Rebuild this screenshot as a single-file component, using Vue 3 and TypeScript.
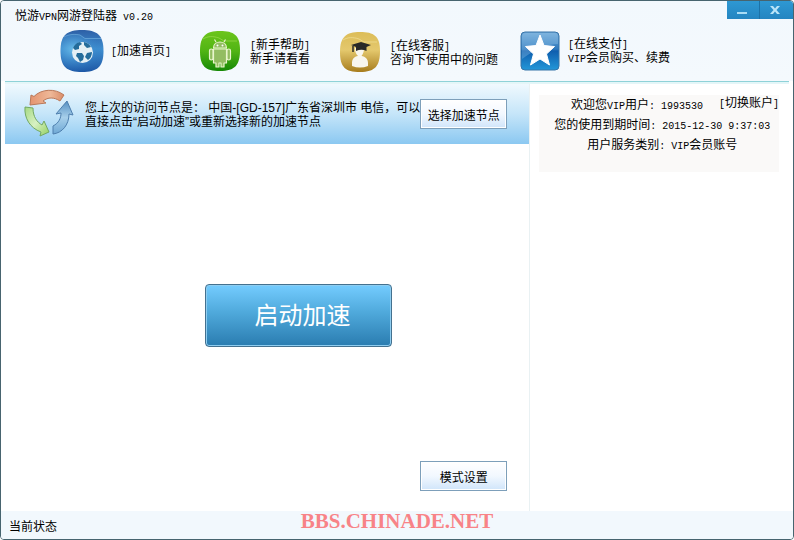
<script setup lang="ts">
import { ref } from 'vue'

const version = ref('v0.20')
const account = ref('1993530')
const expires = ref('2015-12-30 9:37:03')
</script>

<template>
  <div class="window" lang="zh-CN">
    <header class="header">
      <div class="titlebar">
        <h1 class="title">悦游<span class="half">VPN</span>网游登陆器<span class="half">&nbsp;{{ version }}</span></h1>
        <div class="controls">
          <button class="control" type="button" aria-label="最小化">
            <svg width="32" height="18" viewBox="0 0 32 18"><path d="M10 12h10" stroke="#a9dcf5" stroke-width="2" /></svg>
          </button>
          <button class="control close" type="button" aria-label="关闭">
            <svg width="33" height="18" viewBox="0 0 33 18"><path d="M10 5h3l2 2.500 2-2.500h3l-3.500 4 3.500 4h-3l-2-2.500-2 2.500h-3l3.500-4z" fill="#b9e4f8" /></svg>
          </button>
        </div>
      </div>
      <nav class="nav">
        <a class="nav-item" href="#home">
          <svg class="icon-home" width="44" height="44" viewBox="0 0 44 44">
            <defs>
              <linearGradient id="blue" x1="0" y1="0" x2="0" y2="1"><stop offset="0" stop-color="#2d5fa6" /><stop offset=".45" stop-color="#3f8fd0" /><stop offset="1" stop-color="#1d57a5" /></linearGradient>
              <radialGradient id="blueGlow" cx=".3" cy=".4" r=".7"><stop offset="0" stop-color="#72c5ee" stop-opacity=".85" /><stop offset="1" stop-color="#2370c0" stop-opacity="0" /></radialGradient>
            </defs>
            <path d="M22 1C37 1 43.500 6 43.500 22S37 43 22 43 .5 38 .5 22 7 1 22 1z" fill="url(#blue)" />
            <path d="M3 9c5-4 12-4 17-3l5 3.500h17c1 5 1 11 1 14-1 16-9 19-21 19S1 39 1 22c0-6 0-9 2-13z" fill="url(#blueGlow)" />
            <path d="M4 8c5-3 11-3 16-2l5 3.500h16" fill="none" stroke="#78b7e4" stroke-width="1" opacity=".6" />
            <circle cx="22.500" cy="23.500" r="10.500" fill="#e4eff5" />
            <path d="M13 19q2-5 7-6l2 2-3 2 0 3-4 1zM24 13q5 1 7 5l-4 1-3-3zM17 24l5 0 2 3-1 4-3 2-2-4-2-2zM27 24l5-1q0 5-4 8l-3-3z" fill="#246c9b" />
          </svg>
          <span class="nav-text"><i class="half">[</i>加速首页<i class="half">]</i></span>
        </a>
        <a class="nav-item" href="#help">
          <svg width="42" height="42" viewBox="0 0 42 42">
            <defs><linearGradient id="green" x1="0" y1="0" x2="0" y2="1"><stop offset="0" stop-color="#6cc51c" /><stop offset=".5" stop-color="#51b414" /><stop offset="1" stop-color="#168806" /></linearGradient></defs>
            <path d="M20 1C34 1 40 5 40 20S35 41 20 41 0 36 0 21 6 1 20 1z" fill="url(#green)" />
            <path d="M3 9c5-3 10-3 16-1l5 3h13" fill="none" stroke="#a7df58" opacity=".6" />
            <g fill="#93bd62" stroke="#e9f5cd" stroke-width="1.200" stroke-linejoin="round">
              <path d="M16 12l-1.500-2.500M24 12l1.500-2.500" />
              <path d="M13.500 18c0-8 13-8 13 0z" />
              <path d="M13.500 19h13v14h-2.500v4h-3v-4h-2v4h-3v-4h-2.500z" />
              <rect x="9.500" y="19" width="3.500" height="11" rx="1.700" /><rect x="27" y="19" width="3.500" height="11" rx="1.700" />
            </g>
            <circle cx="17.500" cy="15.500" r="1" fill="#fff" /><circle cx="22.500" cy="15.500" r="1" fill="#fff" />
          </svg>
          <span class="nav-text"><i class="half">[</i>新手帮助<i class="half">]</i><br />新手请看看</span>
        </a>
        <a class="nav-item low" href="#service">
          <svg width="42" height="42" viewBox="0 0 42 42">
            <defs><linearGradient id="gold" x1="0" y1="0" x2="0" y2="1"><stop offset="0" stop-color="#dcbd58" /><stop offset=".45" stop-color="#e4c86d" /><stop offset="1" stop-color="#a77c1d" /></linearGradient></defs>
            <path d="M20 1C34 1 40 5 40 20S35 41 20 41 0 36 0 21 6 1 20 1z" fill="url(#gold)" />
            <path d="M3 9c5-3 10-3 16-1l5 3h13" fill="none" stroke="#f1df98" opacity=".7" />
            <path d="M15 17h9c0 4-1 6-2.500 8 4 .5 6.500 3 6.500 7v3q-8 3-16 0v-3c0-4 2-6.500 6-7-2-2-3-4-3-8z" fill="#f8f6ee" />
            <path d="M11 14l10-3 10 3-4.500 2v4q-5-2.500-10.500 0v-4z" fill="#292a28" /><path d="M13 15v6" stroke="#292a28" stroke-width="1.500" />
          </svg>
          <span class="nav-text"><i class="half">[</i>在线客服<i class="half">]</i><br />咨询下使用中的问题</span>
        </a>
        <a class="nav-item" href="#pay">
          <svg width="40" height="40" viewBox="0 0 40 40">
            <defs><linearGradient id="starBlue" x1="0" y1="0" x2="0" y2="1"><stop offset="0" stop-color="#70a9d8" /><stop offset=".45" stop-color="#2c78bd" /><stop offset=".5" stop-color="#0f5eae" /><stop offset="1" stop-color="#2397d8" /></linearGradient></defs>
            <rect x="1" y="1" width="38" height="38" rx="4" fill="url(#starBlue)" stroke="#3674a8" />
            <path d="M2 6q0-4 4-4h29q3 0 3 4v7Q22 13 2 28z" fill="#a5d2ef" opacity=".3" />
            <path d="M20 4l4 10.500 10.500 1-8 7.500 3 11-9.500-6-9.500 6 3-11-8-7.500 10.500-1z" fill="#fff" stroke="#fff" stroke-linejoin="round" />
          </svg>
          <span class="nav-text"><i class="half">[</i>在线支付<i class="half">]</i><br /><i class="half">VIP</i>会员购买、续费</span>
        </a>
      </nav>
    </header>

    <main class="main">
      <section class="left">
        <div class="banner">
          <svg class="cycle" width="50" height="50" viewBox="0 0 50 50" stroke-linejoin="round">
            <defs>
              <linearGradient id="arrowRed" x1="0" y1="0" x2="1" y2="0"><stop offset="0" stop-color="#e49470" /><stop offset=".6" stop-color="#eeb898" /><stop offset="1" stop-color="#d98c68" /></linearGradient>
              <linearGradient id="arrowGreen" x1="0" y1="0" x2="1" y2="1"><stop offset="0" stop-color="#a5d982" /><stop offset=".5" stop-color="#d7f1c3" /><stop offset="1" stop-color="#93d05f" /></linearGradient>
              <linearGradient id="arrowBlue" x1="0" y1="0" x2="0" y2="1"><stop offset="0" stop-color="#548fc2" /><stop offset=".5" stop-color="#a7cfea" /><stop offset="1" stop-color="#6ea8d5" /></linearGradient>
            </defs>
            <path d="M7 7l3 1.500C17 1 31 0 40 7l-4 6c-6-4-12-4-17 0l3 2L6 17z" fill="url(#arrowRed)" stroke="#b97859" />
            <path d="M1 19l8 1c0 9 4 14 9 17l2-4 5 11-9 4 1-4C6 40 0 30 1 19z" fill="url(#arrowGreen)" stroke="#72a862" />
            <path d="M43 13l6 14-4-1c0 11-7 19-16 20v-8c6-3 8-8 8-13l-5 1z" fill="url(#arrowBlue)" stroke="#4e7fae" />
          </svg>
          <p class="banner-text">您上次的访问节点是： 中国-[GD-157]广东省深圳市 电信，可以<br />直接点击“启动加速”或重新选择新的加速节点</p>
          <button class="plain-button" type="button">选择加速节点</button>
        </div>
        <div class="stage">
          <button class="start-button" type="button">启动加速</button>
          <button class="plain-button mode-button" type="button">模式设置</button>
        </div>
      </section>
      <aside class="right">
        <div class="account">
          <div class="account-row first">
            <span>欢迎您<i class="half">VIP</i>用户<i class="half">:&nbsp;{{ account }}</i></span>
            <a class="switch" href="#switch"><i class="half">[</i>切换账户<i class="half">]</i></a>
          </div>
          <div class="account-row">您的使用到期时间<i class="half">:&nbsp;{{ expires }}</i></div>
          <div class="account-row">用户服务类别<i class="half">:&nbsp;VIP</i>会员账号</div>
        </div>
      </aside>
    </main>

    <footer class="status">
      <span class="status-text">当前状态</span>
      <strong class="site">BBS.CHINADE.NET</strong>
    </footer>
  </div>
</template>

<style>
body {
  background: #fff;
}
</style>

<style scoped>
* {
  box-sizing: border-box;
}
.window {
  display: flex;
  flex-direction: column;
  min-height: 100vh;
  border: 1px solid #47646f;
  border-radius: 4px;
  overflow: hidden;
  background: #fff;
  color: #000;
  font: 12px/12px "Liberation Sans", "Noto Sans CJK SC", sans-serif;
}
a {
  color: inherit;
  text-decoration: none;
}
button {
  margin: 0;
  padding: 0;
  font-family: inherit;
  color: inherit;
  cursor: pointer;
}
svg {
  display: block;
  flex: none;
}
.half {
  font: normal 10px/12px "Liberation Mono", monospace;
}
.header {
  height: 83px;
  background: linear-gradient(#f2f8fd, #f4f9fd) 0 0 / 100% 80px no-repeat;
}
.titlebar {
  display: flex;
  justify-content: space-between;
  height: 28px;
  padding-left: 14px;
}
.title {
  margin: 0;
  padding-top: 9px;
  font-size: 12px;
  line-height: 12px;
  font-weight: 400;
}
.controls {
  display: flex;
  height: 18px;
  background: linear-gradient(#2e98d3, #2485c1);
}
.control {
  border: 0;
  background: none;
}
.close {
  border-left: 1px solid #1c72a8;
}
.nav {
  display: grid;
  grid-template-columns: 140px 140px 180px 1fr;
  height: 53px;
  margin: 0 4px;
  padding-left: 55px;
  border-bottom: 1px solid #8fd2d8;
  box-shadow: 0 2px 0 #e4f6f8;
}
.nav-item {
  display: flex;
  align-items: center;
  gap: 8px;
  height: 44px;
  white-space: nowrap;
}
.low {
  height: 46px;
}
.nav-text {
  padding-top: 2px;
}
.icon-home {
  margin-right: -1px;
}
.main {
  flex: 1;
  display: grid;
  grid-template-columns: 2fr 1fr;
  margin: 0 4px;
}
.left {
  display: flex;
  flex-direction: column;
  border-right: 1px solid #e9f1f3;
}
.banner {
  display: flex;
  align-items: center;
  height: 60px;
  padding: 0 22px 0 19px;
  background: linear-gradient(#f0f9fe, #c5e5f9 50%, #8bc8f1);
}
.cycle {
  align-self: flex-start;
  margin-top: 4px;
}
.banner-text {
  flex: 1;
  min-width: 0;
  margin: 0 0 0 11px;
  padding-top: 2px;
  line-height: 14px;
  white-space: nowrap;
  overflow: hidden;
}
.plain-button {
  flex: none;
  width: 87px;
  height: 30px;
  border: 1px solid #7d9fba;
  box-shadow: inset 0 0 0 1px #fff;
  background: linear-gradient(#fff, #f2f8ff 50%, #d0e5fa);
  font-size: 12px;
}
.stage {
  flex: 1;
  display: flex;
  flex-direction: column;
  padding: 140px 22px 20px 200px;
}
.start-button {
  width: 187px;
  height: 63px;
  padding: 0 0 4px 8px;
  border: 1px solid #44718f;
  border-radius: 4px;
  box-shadow: inset 0 0 0 1px #8fcdf0;
  background: linear-gradient(#74ccff, #4fa9db 45%, #2a7cb0);
  color: #fff;
  font-size: 24px;
  font-weight: 400;
}
.mode-button {
  margin-top: auto;
  align-self: flex-end;
}
.right {
  padding: 11px 10px 0 9px;
}
.account {
  height: 77px;
  padding-left: 6px;
  background: #faf9f8;
  white-space: nowrap;
}
.account-row {
  height: 20px;
  line-height: 20px;
  text-align: center;
}
.first {
  display: flex;
  justify-content: flex-end;
  gap: 16px;
}
.switch {
  line-height: 16px;
}
.status {
  display: grid;
  grid-template-columns: 1fr auto 1fr;
  align-items: center;
  height: 28px;
  padding: 0 8px;
  background: #f2f8fd;
}
.status-text {
  padding-top: 4px;
}
.site {
  align-self: start;
  color: #f88387;
  font: bold 21px/20px "Liberation Serif", serif;
}
</style>
